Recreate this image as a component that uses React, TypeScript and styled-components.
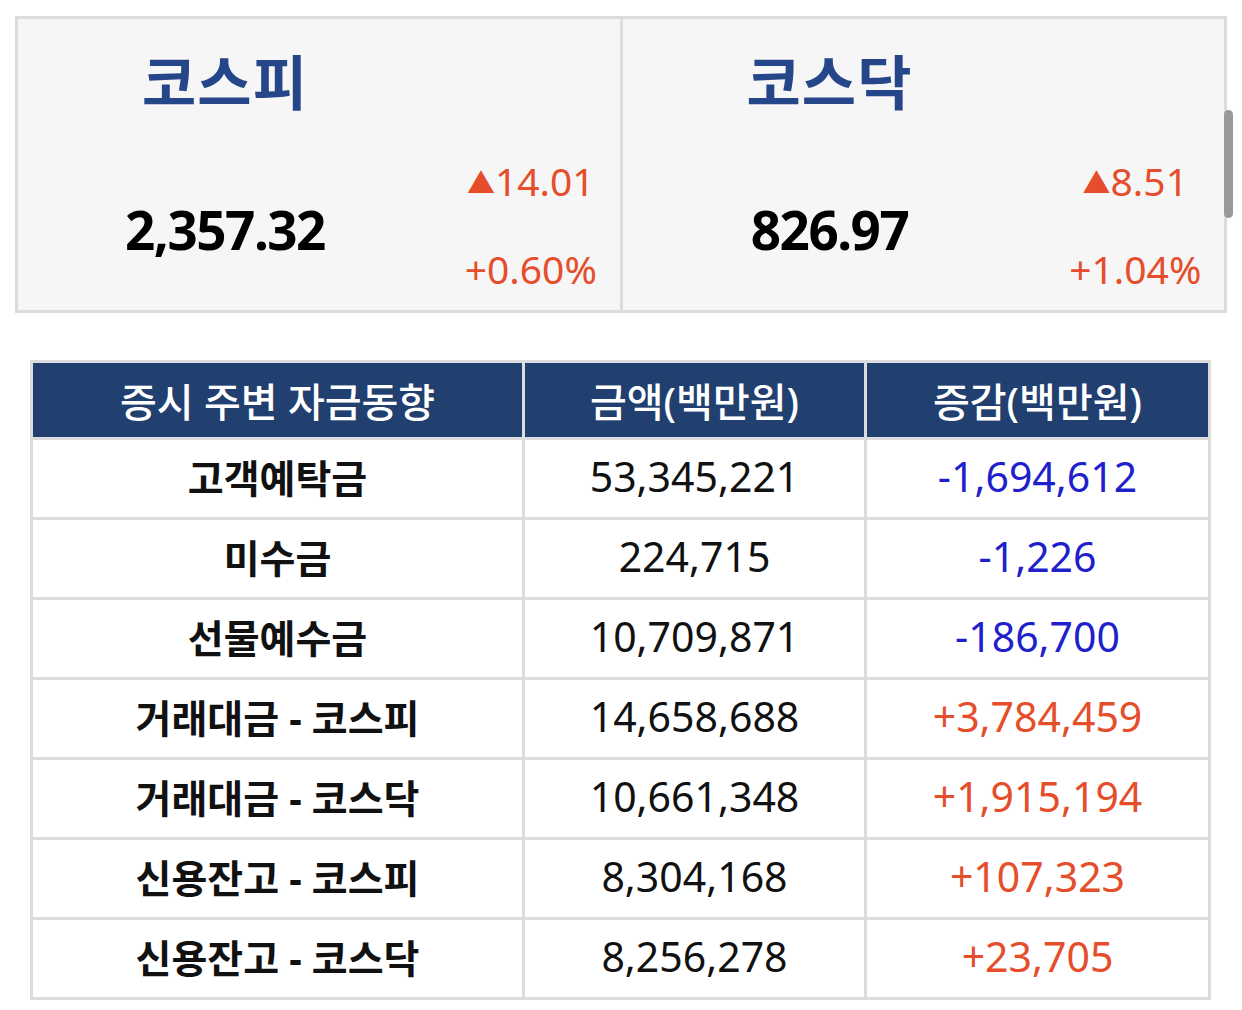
import React from 'react';
import styled, {createGlobalStyle} from 'styled-components';

const GlobalStyle = createGlobalStyle`
    html, body {
        margin: 0;
        padding: 0;
        background: #fff;
    }
    body {
        font-family: "Noto Sans", "Noto Sans CJK KR", sans-serif;
        color: #000;
    }
`;

const UP = '#e54d2b';
const DOWN = '#1f1fcc';
const LINE = '#dcdcdc';

const Page = styled.div`
    width: 1242px;
    padding: 16px 0 0;
    box-sizing: border-box;
`;

const IndexBoard = styled.section`
    margin: 0 15px;
    display: grid;
    grid-template-columns: 1fr 1fr;
    gap: 3px;
    padding: 3px;
    background: ${LINE};
    height: 297px;
    box-sizing: border-box;
`;

const IndexCard = styled.div`
    background: #f6f6f6;
    display: grid;
    grid-template-columns: 414px 1fr;
    grid-template-rows: auto 1fr;
`;

const IndexName = styled.h2`
    grid-column: 1;
    margin: 0;
    padding-top: 28px;
    text-align: center;
    font-size: 59px;
    line-height: 70px;
    font-weight: 700;
    color: #26468a;
    letter-spacing: 1px;
`;

const IndexValue = styled.div`
    grid-column: 1;
    grid-row: 2;
    padding-top: 81px;
    text-align: center;
    font-size: 53px;
    line-height: 64px;
    font-weight: 700;
    letter-spacing: -1.5px;
`;

const ChangeBox = styled.div`
    grid-column: 2;
    grid-row: 2;
    padding-top: 40px;
    padding-left: 10px;
    display: flex;
    flex-direction: column;
    align-items: center;
    gap: 38px;
    color: ${UP};
    font-size: 39px;
    line-height: 48px;
`;

const Arrow = styled.span`
    font-size: 28px;
    vertical-align: 2px;
`;

const ScrollThumb = styled.div`
    position: fixed;
    left: 1224px;
    top: 110px;
    width: 9px;
    height: 108px;
    border-radius: 5px;
    background: #999;
`;

const FundTable = styled.div`
    margin: 47px 0 0 30px;
    width: 1181px;
    display: grid;
    grid-template-columns: 489px 339px 341px;
    grid-template-rows: 74px;
    grid-auto-rows: 77px;
    gap: 3px;
    padding: 3px;
    box-sizing: border-box;
    background: ${LINE};
`;

const Cell = styled.div<{$head?: boolean; $bold?: boolean; $tone?: 'up' | 'down'}>`
    display: flex;
    align-items: center;
    justify-content: center;
    padding-bottom: ${p => (p.$head ? '0' : '6px')};
    background: ${p => (p.$head ? '#213f6f' : '#fff')};
    color: ${p => (p.$head ? '#fff' : p.$tone === 'up' ? UP : p.$tone === 'down' ? DOWN : '#111')};
    font-size: ${p => (p.$head ? '40px' : p.$bold ? '39px' : '41px')};
    font-weight: ${p => (p.$bold ? 700 : p.$head ? 500 : 400)};
    white-space: nowrap;
`;

const indices = [
    {name: '코스피', value: '2,357.32', diff: '14.01', rate: '+0.60%'},
    {name: '코스닥', value: '826.97', diff: '8.51', rate: '+1.04%'},
];

const rows = [
    ['고객예탁금', '53,345,221', '-1,694,612'],
    ['미수금', '224,715', '-1,226'],
    ['선물예수금', '10,709,871', '-186,700'],
    ['거래대금 - 코스피', '14,658,688', '+3,784,459'],
    ['거래대금 - 코스닥', '10,661,348', '+1,915,194'],
    ['신용잔고 - 코스피', '8,304,168', '+107,323'],
    ['신용잔고 - 코스닥', '8,256,278', '+23,705'],
];

export default function App() {
    return (
        <Page>
            <GlobalStyle />
            <IndexBoard>
                {indices.map(i => (
                    <IndexCard key={i.name}>
                        <IndexName>{i.name}</IndexName>
                        <IndexValue>{i.value}</IndexValue>
                        <ChangeBox>
                            <span>
                                <Arrow>▲</Arrow>
                                {i.diff}
                            </span>
                            <span>{i.rate}</span>
                        </ChangeBox>
                    </IndexCard>
                ))}
            </IndexBoard>
            <ScrollThumb />
            <FundTable>
                <Cell $head>증시 주변 자금동향</Cell>
                <Cell $head>금액(백만원)</Cell>
                <Cell $head>증감(백만원)</Cell>
                {rows.map(([label, amount, delta]) => (
                    <React.Fragment key={label}>
                        <Cell $bold>{label}</Cell>
                        <Cell>{amount}</Cell>
                        <Cell $tone={delta.startsWith('-') ? 'down' : 'up'}>{delta}</Cell>
                    </React.Fragment>
                ))}
            </FundTable>
        </Page>
    );
}
